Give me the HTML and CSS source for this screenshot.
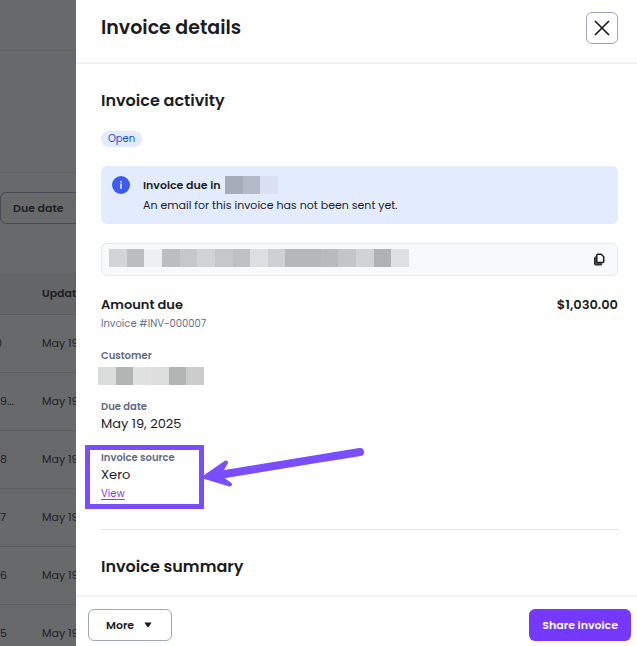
FILE: index.html
```
<!DOCTYPE html>
<html lang="en">
<head>
    <meta charset="UTF-8">
    <meta name="viewport" content="width=device-width, initial-scale=1.0">
    <title>Invoice details</title>
    <link rel="stylesheet" href="styles.css">
</head>
<body>
    <!-- Invoice list behind the drawer -->
    <main class="page">
        <div class="page-top"></div>
        <div class="page-summary"></div>
        <div class="filters">
            <button type="button" class="filter-btn">Due date</button>
        </div>
        <table class="invoice-table">
            <thead>
                <tr><th class="col-number"></th><th>Updated</th></tr>
            </thead>
            <tbody>
                <tr><td class="cut">0</td><td>May 19, 2025</td></tr>
                <tr><td>9...</td><td>May 19, 2025</td></tr>
                <tr><td>8</td><td>May 19, 2025</td></tr>
                <tr><td>7</td><td>May 19, 2025</td></tr>
                <tr><td>6</td><td>May 19, 2025</td></tr>
                <tr><td>5</td><td>May 19, 2025</td></tr>
            </tbody>
        </table>
    </main>

    <aside class="drawer">
        <header class="drawer-header">
            <h1>Invoice details</h1>
            <button type="button" class="close-btn" aria-label="Close">
                <svg width="16" height="16" viewBox="0 0 16 16" fill="none" stroke="#1b1c1e" stroke-width="1.7">
                    <path d="M1 1l14 14M15 1L1 15"/>
                </svg>
            </button>
        </header>

        <div class="drawer-body">
            <h2>Invoice activity</h2>
            <span class="badge">Open</span>

            <div class="alert">
                <svg class="alert-icon" width="18" height="18" viewBox="0 0 18 18">
                    <circle cx="9" cy="9" r="9" fill="#3d5af5"/>
                    <circle cx="9" cy="5.7" r="0.9" fill="#fff"/>
                    <path d="M9 7.6v5.2" stroke="#fff" stroke-width="1.4"/>
                </svg>
                <div>
                    <div class="alert-title">Invoice due in <span class="redacted redacted-days"></span></div>
                    <div class="alert-text">An email for this invoice has not been sent yet.</div>
                </div>
            </div>

            <div class="link-box">
                <span class="redacted redacted-link"></span>
                <button type="button" class="copy-btn" aria-label="Copy link">
                    <svg width="12" height="13" viewBox="0 0 12 13" fill="none" stroke="#1b1c1e" stroke-width="1.5" stroke-linejoin="round">
                        <path d="M1.5 4.4a1.2 1.2 0 0 1 1.2-1.2h1v6.3h4.9v1a1.2 1.2 0 0 1-1.2 1.2H2.9a1.4 1.4 0 0 1-1.4-1.4z" fill="#55565a" stroke="none"/>
                        <path d="M4.8 1.3h3.4l2.5 2.4v4.8a1 1 0 0 1-1 1H4.8a1 1 0 0 1-1-1V2.3a1 1 0 0 1 1-1z"/>
                        <path d="M1.6 4.4v6a1.4 1.4 0 0 0 1.4 1.4h4.7a1.2 1.2 0 0 0 1.2-1.2" stroke-width="1.2"/>
                    </svg>
                </button>
            </div>

            <div class="amount">
                <span>Amount due</span>
                <span>$1,030.00</span>
            </div>
            <div class="invoice-number">Invoice #INV-000007</div>

            <dl class="fields">
                <div class="field">
                    <dt>Customer</dt>
                    <dd><span class="redacted redacted-customer"></span></dd>
                </div>
                <div class="field">
                    <dt>Due date</dt>
                    <dd>May 19, 2025</dd>
                </div>
                <div class="field source">
                    <dt>Invoice source</dt>
                    <dd>Xero</dd>
                    <dd class="view"><a href="#">View</a></dd>
                    <div class="highlight"></div>
                    <svg class="arrow" width="164" height="44" viewBox="0 0 164 44" fill="none" stroke="#7a4dff" stroke-linecap="round" stroke-linejoin="round">
                        <path d="M158 7L14 30.5" stroke-width="8"/>
                        <path d="M24 17.5L3 32L28 39.5L16 31Z" fill="#7a4dff" stroke-width="4"/>
                    </svg>
                </div>
            </dl>

            <h2 class="summary-title">Invoice summary</h2>
        </div>

        <footer class="drawer-footer">
            <button type="button" class="more-btn">More
                <svg width="8" height="6" viewBox="0 0 8 6"><path d="M1.2.5h5.6q1 0 .4.8L4.6 4.9q-.6.8-1.2 0L.8 1.3Q.2.5 1.2.5z" fill="#1b1c1e"/></svg>
            </button>
            <button type="button" class="share-btn">Share invoice</button>
        </footer>
    </aside>
</body>
</html>
```
FILE: styles.css
```
* {
    box-sizing: border-box;
}
body {
    margin: 0;
    height: 100vh;
    overflow: hidden;
    font-family: Poppins, Inter, sans-serif;
    font-size: 11px;
    line-height: 18px;
    color: #1b1c1e;
}
h1, h2, dl, dd {
    margin: 0;
}
h1 {
    font-size: 19px;
    line-height: 28px;
    font-weight: 600;
}
h2 {
    font-size: 16px;
    line-height: 24px;
    font-weight: 600;
}
button {
    font: inherit;
    font-weight: 600;
    color: inherit;
    cursor: pointer;
}

/* dimmed page */
.page {
    height: 100vh;
    overflow: hidden;
    background-color: #68696b;
    color: #202123;
}
.page-top {
    height: 51px;
    border-bottom: 1px solid #5f6062;
}
.page-summary {
    height: 122px;
    border-bottom: 1px solid #5f6062;
}
.filters {
    padding: 19px 0 49px;
}
.filter-btn {
    display: block;
    width: 120px;
    height: 32px;
    padding: 0 12px;
    text-align: left;
    background: none;
    border: 1px solid #484a55;
    border-radius: 6px;
}
.invoice-table {
    width: 100%;
    border-collapse: collapse;
    table-layout: fixed;
}
.invoice-table th {
    height: 41px;
    padding: 0;
    text-align: left;
    font-weight: 600;
    background-color: #646567;
    border-bottom: 1px solid #5b5c5e;
}
.invoice-table td {
    height: 58px;
    padding: 0;
    border-bottom: 1px solid #5b5c5e;
}
.invoice-table .col-number {
    width: 42px;
}
.invoice-table .cut {
    text-indent: -5px;
}

/* drawer */
.drawer {
    position: fixed;
    top: 0;
    right: 0;
    bottom: 0;
    left: 76px;
    display: flex;
    flex-direction: column;
    background-color: #fff;
}
.drawer-header {
    display: flex;
    align-items: center;
    justify-content: space-between;
    padding: 12px 19px 18px 25px;
    border-bottom: 2px solid #f1f1f2;
}
.close-btn {
    display: flex;
    align-items: center;
    justify-content: center;
    width: 32px;
    height: 32px;
    padding: 0;
    background: #fff;
    border: 1px solid #a0a5bd;
    border-radius: 6px;
}
.drawer-body {
    flex: 1;
    min-height: 0;
    overflow: hidden;
    padding: 25px 19px 0 25px;
}
.badge {
    display: block;
    width: fit-content;
    margin-top: 18px;
    padding: 0 7px;
    font-size: 10px;
    line-height: 16px;
    color: #1f50c0;
    background-color: #e1eafe;
    border-radius: 8px;
}
.alert {
    display: flex;
    gap: 13px;
    margin-top: 19px;
    padding: 10px 11px 8px;
    background-color: #e3ecfe;
    border-radius: 6px;
}
.alert-title {
    display: flex;
    align-items: center;
    gap: 5px;
    font-weight: 600;
}
.alert-text {
    line-height: 22px;
}
.redacted {
    display: block;
    height: 18px;
}
.redacted-days {
    width: 53px;
    background: linear-gradient(to right, #a5acba 18px, #b3bac8 18px 35px, #d9e1f3 35px);
}
.redacted-link {
    width: 300px;
    background: linear-gradient(to right,
        #d3d4d6 18px, #bcbdbf 18px 35px, #eeeff1 35px 53px, #bcbdbf 53px 71px,
        #c6c7c9 71px 88px, #d1d2d4 88px 106px, #c6c7c9 106px 124px, #bfc0c2 124px 141px,
        #dedfe1 141px 159px, #cfd0d2 159px 176px, #b6b7b9 176px 212px, #b9babc 212px 229px,
        #c4c5c7 229px 247px, #d1d2d4 247px 265px, #b0b1b3 265px 282px, #dfe0e2 282px);
}
.redacted-customer {
    width: 106px;
    margin: 4px 0 -2px -3px;
    background: linear-gradient(to right,
        #dadddb 18px, #b2b5b3 18px 35px, #e1e1e1 35px 53px,
        #dedede 53px 71px, #b2b5b3 71px 88px, #cccccc 88px);
}
.link-box {
    display: flex;
    justify-content: space-between;
    margin-top: 19px;
    padding: 5px 12px 8px 7px;
    background-color: #f8f9fb;
    border: 1px solid #e8e9ec;
    border-radius: 6px;
}
.copy-btn {
    display: flex;
    padding: 4px 0 0;
    background: none;
    border: 0;
}
.amount {
    display: flex;
    justify-content: space-between;
    margin-top: 19px;
    font-size: 13px;
    line-height: 20px;
    font-weight: 600;
}
.invoice-number {
    font-size: 10px;
    color: #6a7089;
}
.fields {
    display: flex;
    flex-direction: column;
    gap: 17px;
    margin-top: 16px;
    padding-bottom: 26px;
    border-bottom: 1px solid #e2e3e5;
}
.field dt {
    font-size: 10px;
    font-weight: 600;
    color: #636a86;
    line-height: 14px;
}
.field dd {
    font-size: 13px;
    line-height: 20px;
}
.field dd.view {
    font-size: 10px;
    line-height: 18px;
}
.field a {
    color: #8540f5;
    text-underline-offset: 2px;
}
.source {
    position: relative;
}
/* callout drawn over the source field */
.highlight {
    position: absolute;
    top: -6px;
    left: -16px;
    width: 119px;
    height: 64px;
    border: 5px solid #7a4dff;
}
.arrow {
    position: absolute;
    top: -6px;
    left: 101px;
}
.summary-title {
    margin-top: 25px;
}
.drawer-footer {
    display: flex;
    justify-content: space-between;
    padding: 12px 6px 5px 12px;
    border-top: 2px solid #f3f3f4;
}
.more-btn {
    display: flex;
    align-items: center;
    gap: 10px;
    height: 32px;
    padding: 0 19px 0 17px;
    background: #fff;
    border: 1px solid #a0a5bd;
    border-radius: 6px;
}
.share-btn {
    height: 32px;
    padding: 0 13px;
    color: #fff;
    background-color: #7538ff;
    border: 0;
    border-radius: 6px;
}
```
